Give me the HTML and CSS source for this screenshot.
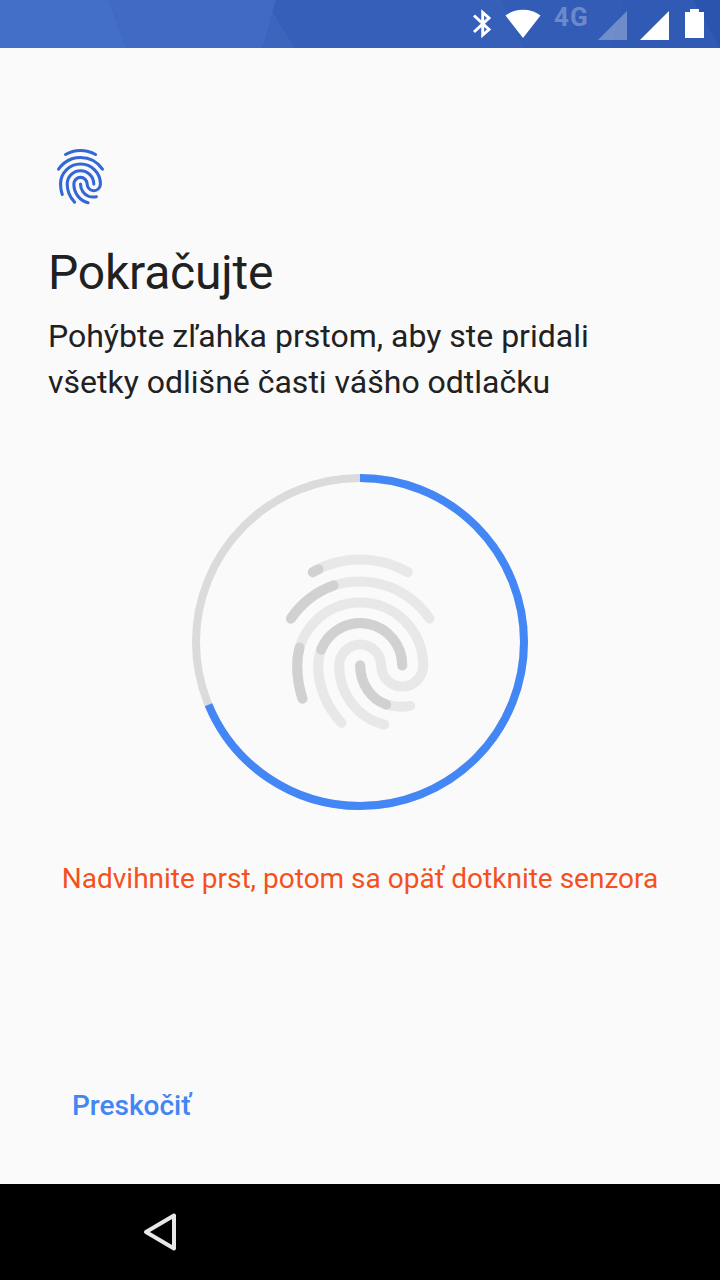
FILE: index.html
```html
<!DOCTYPE html>
<html lang="sk">
<head>
    <meta charset="UTF-8">
    <meta name="viewport" content="width=device-width, initial-scale=1.0">
    <title>Pokračujte</title>
    <link rel="stylesheet" href="styles.css">
</head>
<body>
    <div class="screen">
        <header class="status-bar">
            <!-- Faceted background -->
            <svg class="status-bg" viewBox="0 0 720 48">
                <rect width="720" height="48" fill="#335cb7"/>
                <path d="M0 0H109L126 48H0z" fill="#446fc9"/>
                <path d="M109 0H276L263 48H126z" fill="#406ac3"/>
                <path d="M276 0L273 12L295 48H263z" fill="#3c65be"/>
                <path d="M276 0H502L523 48H295L273 12z" fill="#365fb9"/>
                <path d="M624 0H693L720 48H611z" fill="#305ab4"/>
                <path d="M693 0H720V48z" fill="#2a54ad"/>
            </svg>
            <svg class="icon-bluetooth" viewBox="0 0 20 30">
                <path d="M2 6.500L17 20.500L10.700 26V3.500L17 9L2 23" fill="none" stroke="#fff" stroke-width="2.900"/>
            </svg>
            <svg class="icon-wifi" viewBox="0 0 36 30">
                <path d="M18 29L.5 6.500Q8 .8 18 .8T35.500 6.500z" fill="#fff"/>
            </svg>
            <span class="network">4G</span>
            <svg class="icon-signal dim" viewBox="0 0 29 29">
                <path d="M0 29L29 0V29z" fill="#fff"/>
            </svg>
            <svg class="icon-signal" viewBox="0 0 29 29">
                <path d="M0 29L29 0V29z" fill="#fff"/>
            </svg>
            <svg class="icon-battery" viewBox="0 0 20 29">
                <path d="M0 3H5V0H14V3H19V29H0z" fill="#fff"/>
            </svg>
        </header>

        <main class="content">
            <svg class="icon-fingerprint" viewBox="0 0 540 600">
                <path d="M128 96C170 71 218 58 270 58S370 72 413 96"/>
                <path d="M62 235C94 189 139 154 190 136C215 128 242 124 270 124C356 124 432 168 478 235"/>
                <path d="M97 475C86 443 81 410 81 376A189 189 0 0 1 459 376A63 63 0 0 1 333 376A63 63 0 0 0 207 376C207 462 262 533 342 553"/>
                <path d="M214 548C170 502 144 440 144 376A126 126 0 0 1 396 376"/>
                <path d="M270 376C270 430 302 477 348 493C370 500 397 501 420 497"/>
            </svg>
            <h1 class="title">Pokračujte</h1>
            <p class="description">Pohýbte zľahka prstom, aby ste pridali<br>všetky odlišné časti vášho odtlačku</p>

            <!-- Enrollment progress -->
            <div class="progress">
                <svg class="progress-ring" viewBox="0 0 336 336">
                    <circle class="ring-track" cx="168" cy="168" r="164"/>
                    <circle class="ring-value" cx="168" cy="168" r="164" pathLength="100" transform="rotate(-90 168 168)"/>
                    <g class="ridges" transform="translate(78.200 66.200) scale(.33333)">
                        <path d="M128 96C170 71 218 58 270 58S370 72 413 96"/>
                        <path d="M62 235C94 189 139 154 190 136C215 128 242 124 270 124C356 124 432 168 478 235"/>
                        <path d="M97 475C86 443 81 410 81 376A189 189 0 0 1 459 376A63 63 0 0 1 333 376A63 63 0 0 0 207 376C207 462 262 533 342 553"/>
                        <path d="M214 548C170 502 144 440 144 376A126 126 0 0 1 396 376"/>
                        <path d="M270 376C270 430 302 477 348 493C370 500 397 501 420 497"/>
                    </g>
                    <g class="ridges filled" transform="translate(78.200 66.200) scale(.33333)">
                        <path d="M128 96L145 87"/>
                        <path d="M62 235C94 189 139 154 190 136"/>
                        <path d="M97 475C86 443 81 410 81 376Q81 348 88 322"/>
                        <path d="M153 328A126 126 0 0 1 396 376"/>
                        <path d="M270 376C270 430 302 477 348 493"/>
                    </g>
                </svg>
            </div>

            <p class="error">Nadvihnite prst, potom sa opäť dotknite senzora</p>
            <button class="skip" type="button">Preskočiť</button>
        </main>

        <nav class="nav-bar">
            <svg class="icon-back" viewBox="0 0 36 40">
                <path d="M4 20L32 3.500V36.500z" fill="none" stroke="#e8e8e8" stroke-width="4" stroke-linejoin="round"/>
            </svg>
        </nav>
    </div>
</body>
</html>
```
FILE: styles.css
```css
* {
    box-sizing: border-box;
}

body {
    margin: 0;
    font-family: Roboto, sans-serif;
    background-color: #fafafa;
    color: #212121;
}

.screen {
    display: flex;
    flex-direction: column;
    width: 720px;
    height: 1280px;
}

svg {
    display: block;
    flex: none;
}

.status-bar {
    position: relative;
    display: flex;
    align-items: flex-start;
    height: 48px;
    padding-left: 472px;
}

.status-bar > * {
    position: relative;
}

.status-bar .status-bg {
    position: absolute;
    top: 0;
    left: 0;
    width: 720px;
    height: 48px;
}

.icon-bluetooth {
    width: 20px;
    height: 30px;
    margin-top: 9px;
}

.icon-wifi {
    width: 36px;
    height: 30px;
    margin: 9px 0 0 13px;
}

.network {
    width: 43px;
    margin: 3px 0 0 13px;
    font-size: 26px;
    font-weight: 700;
    line-height: 29px;
    letter-spacing: 1px;
    color: rgba(255, 255, 255, 0.3);
}

.icon-signal {
    width: 29px;
    height: 29px;
    margin: 10.5px 13px 0 0;
}

.icon-signal.dim {
    margin-left: 0.5px;
    opacity: 0.3;
}

.icon-battery {
    width: 20px;
    height: 29px;
    margin: 9px 0 0 3.5px;
}

.content {
    flex: 1;
    display: flex;
    flex-direction: column;
    align-items: flex-start;
    padding: 96px 48px 0;
}

.icon-fingerprint {
    width: 57px;
    height: 64px;
    margin-left: 4px;
    fill: none;
    stroke: #3367d6;
    stroke-width: 29;
    stroke-linecap: round;
}

.title {
    margin: 37px 0 0;
    font-size: 48px;
    font-weight: 400;
    line-height: 56px;
    letter-spacing: -0.2px;
}

.description {
    margin: 12px 0 0;
    font-size: 32px;
    line-height: 46px;
    white-space: nowrap;
}

.progress {
    align-self: center;
    margin-top: 69px;
}

.progress-ring {
    width: 336px;
    height: 336px;
    fill: none;
}

.ring-track {
    stroke: #dbdbdb;
    stroke-width: 8;
}

.ring-value {
    stroke: #4387f6;
    stroke-width: 8;
    stroke-dasharray: 68.75 100;
}

.ridges {
    stroke: #e8e8e8;
    stroke-width: 30;
    stroke-linecap: round;
}

.ridges.filled {
    stroke: #d1d1d1;
}

.error {
    align-self: center;
    margin: 52px 0 0;
    font-size: 28px;
    line-height: 33px;
    color: #f4511e;
    white-space: nowrap;
}

.skip {
    margin: 194px 0 0 24px;
    padding: 0;
    border: none;
    background: none;
    font-family: inherit;
    font-size: 28px;
    font-weight: 500;
    line-height: 33px;
    color: #4285f4;
}

.nav-bar {
    display: flex;
    align-items: center;
    height: 96px;
    padding-left: 142px;
    background-color: #000;
}

.icon-back {
    width: 36px;
    height: 40px;
}
```
